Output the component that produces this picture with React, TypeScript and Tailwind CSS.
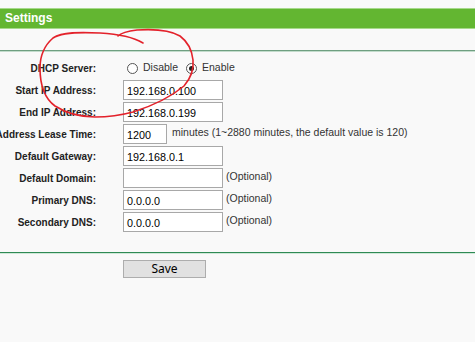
import React from "react";

const label = "text-[10px] font-bold text-[#222] whitespace-nowrap";
const txt = "text-[10.5px] text-[#333] whitespace-nowrap";

function Row({ name, children }: { name: string; children: React.ReactNode }) {
  return (
    <div className="flex h-[22px] items-center">
      <div className="flex w-[96px] shrink-0 justify-end">
        <span className={label}>{name}</span>
      </div>
      <div className="ml-[27px] flex items-center">{children}</div>
    </div>
  );
}

function Box({ value, w = "w-[100px]" }: { value: string; w?: string }) {
  return (
    <div
      className={`${w} h-[20px] border border-[#a8a8a8] bg-white pl-[3px] text-[10.8px] leading-[18px] text-black pt-[1px]`}
    >
      {value}
    </div>
  );
}

export default function App() {
  return (
    <div
      className="relative h-[342px] w-[475px] overflow-hidden bg-[#f9f9f9]"
      style={{ fontFamily: '"Liberation Sans", Arial, sans-serif' }}
    >
      <div className="mt-[8px] h-[21px] border-y border-[#a6d98a] bg-[#63b631] pl-[5px] text-[12px] font-bold leading-[19px] text-white">
        Settings
      </div>
      <div className="mt-[21px] h-px bg-[#6f9f81]" />
      <div className="h-px bg-[#c3dccc]" />
      <div className="mt-[5px]">
        <Row name="DHCP Server:">
          <div className="flex items-center">
            <span className="ml-[4px] h-[11px] w-[11px] rounded-full border border-[#555] bg-white" />
            <span className={`${txt} ml-[5px]`}>Disable</span>
            <span className="ml-[8px] flex h-[11px] w-[11px] items-center justify-center rounded-full border border-[#555] bg-white">
              <span className="h-[5px] w-[5px] rounded-full bg-[#222]" />
            </span>
            <span className={`${txt} ml-[5px]`}>Enable</span>
          </div>
        </Row>
        <Row name="Start IP Address:">
          <Box value="192.168.0.100" />
        </Row>
        <Row name="End IP Address:">
          <Box value="192.168.0.199" />
        </Row>
        <Row name="Address Lease Time:">
          <Box value="1200" w="w-[44px]" />
          <span className={`${txt} ml-[5px] -mt-[3px]`}>
            minutes (1~2880 minutes, the default value is 120)
          </span>
        </Row>
        <Row name="Default Gateway:">
          <Box value="192.168.0.1" />
        </Row>
        <Row name="Default Domain:">
          <Box value="" />
          <span className={`${txt} ml-[3px] -mt-[3px]`}>(Optional)</span>
        </Row>
        <Row name="Primary DNS:">
          <Box value="0.0.0.0" />
          <span className={`${txt} ml-[3px] -mt-[3px]`}>(Optional)</span>
        </Row>
        <Row name="Secondary DNS:">
          <Box value="0.0.0.0" />
          <span className={`${txt} ml-[3px] -mt-[3px]`}>(Optional)</span>
        </Row>
      </div>
      <div className="mt-[19px] h-px bg-[#2f8a55]" />
      <div className="h-px bg-[#cfe8d8]" />
      <div className="ml-[123px] mt-[6px]">
        <div
          className="flex h-[18px] w-[83px] items-center justify-center border border-[#adadad] bg-[#e1e1e1] text-[12px] text-black"
          style={{ fontFamily: '"Noto Sans", "DejaVu Sans", sans-serif' }}
        >
          Save
        </div>
      </div>
      <svg
        className="pointer-events-none absolute left-0 top-0"
        width="475"
        height="342"
        viewBox="0 0 475 342"
      >
        <path
          d="M143 43 C133 37 118 34 100 33 C80 32 62 32 53 38 C45 45 40 56 40 68 C40 86 44 98 55 106 C66 113 80 117 95 117 C110 117 122 115 133 112 C152 106 172 96 184 86 C191 78 194 70 193 60 C192 50 188 42 180 36 C170 30 152 29 137 30 C128 31 121 33 118 36"
          fill="none"
          stroke="#e3222b"
          strokeWidth="1.6"
          strokeLinecap="round"
        />
      </svg>
    </div>
  );
}
